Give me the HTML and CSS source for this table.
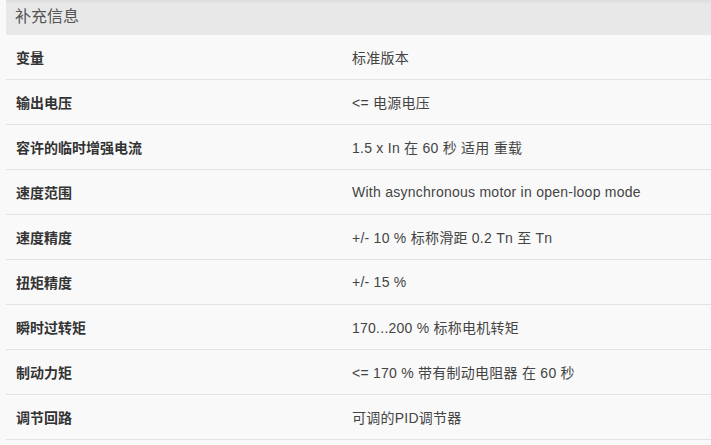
FILE: index.html
```html
<!DOCTYPE html>
<html lang="zh">
<head>
<meta charset="utf-8">
<link rel="stylesheet" href="styles.css">
</head>
<body>
<div class="panel">
  <div class="head">补充信息</div>
  <div class="row"><div class="k">变量</div><div class="v">标准版本</div></div>
  <div class="row"><div class="k">输出电压</div><div class="v">&lt;= 电源电压</div></div>
  <div class="row"><div class="k">容许的临时增强电流</div><div class="v">1.5 x In 在 60 秒 适用 重载</div></div>
  <div class="row"><div class="k">速度范围</div><div class="v">With asynchronous motor in open-loop mode</div></div>
  <div class="row"><div class="k">速度精度</div><div class="v">+/- 10 % 标称滑距 0.2 Tn 至 Tn</div></div>
  <div class="row"><div class="k">扭矩精度</div><div class="v">+/- 15 %</div></div>
  <div class="row"><div class="k">瞬时过转矩</div><div class="v">170...200 % 标称电机转矩</div></div>
  <div class="row"><div class="k">制动力矩</div><div class="v">&lt;= 170 % 带有制动电阻器 在 60 秒</div></div>
  <div class="row"><div class="k">调节回路</div><div class="v">可调的PID调节器</div></div>
</div>
</body>
</html>
```

FILE: styles.css
```css
html, body {
  margin: 0;
  padding: 0;
  background: #f9f9f9;
}
body {
  font-family: "Liberation Sans", "Noto Sans CJK SC", sans-serif;
  font-size: 14px;
  color: #333;
}
.panel {
  margin-left: 6px;
}
.head {
  height: 35px;
  box-sizing: border-box;
  background: linear-gradient(#dcdcdc 0, #e8e8e8 4px, #e8e8e8 100%);
  padding-left: 9px;
  line-height: 33px;
  font-size: 16px;
  color: #555;
}
.row {
  display: flex;
  align-items: center;
  height: 45px;
  box-sizing: border-box;
  border-bottom: 1px solid #e3e3e3;
}
.k {
  width: 336px;
  padding-left: 10px;
  font-weight: bold;
  color: #333;
}
.v {
  color: #444;
  letter-spacing: 0.25px;
}
```
